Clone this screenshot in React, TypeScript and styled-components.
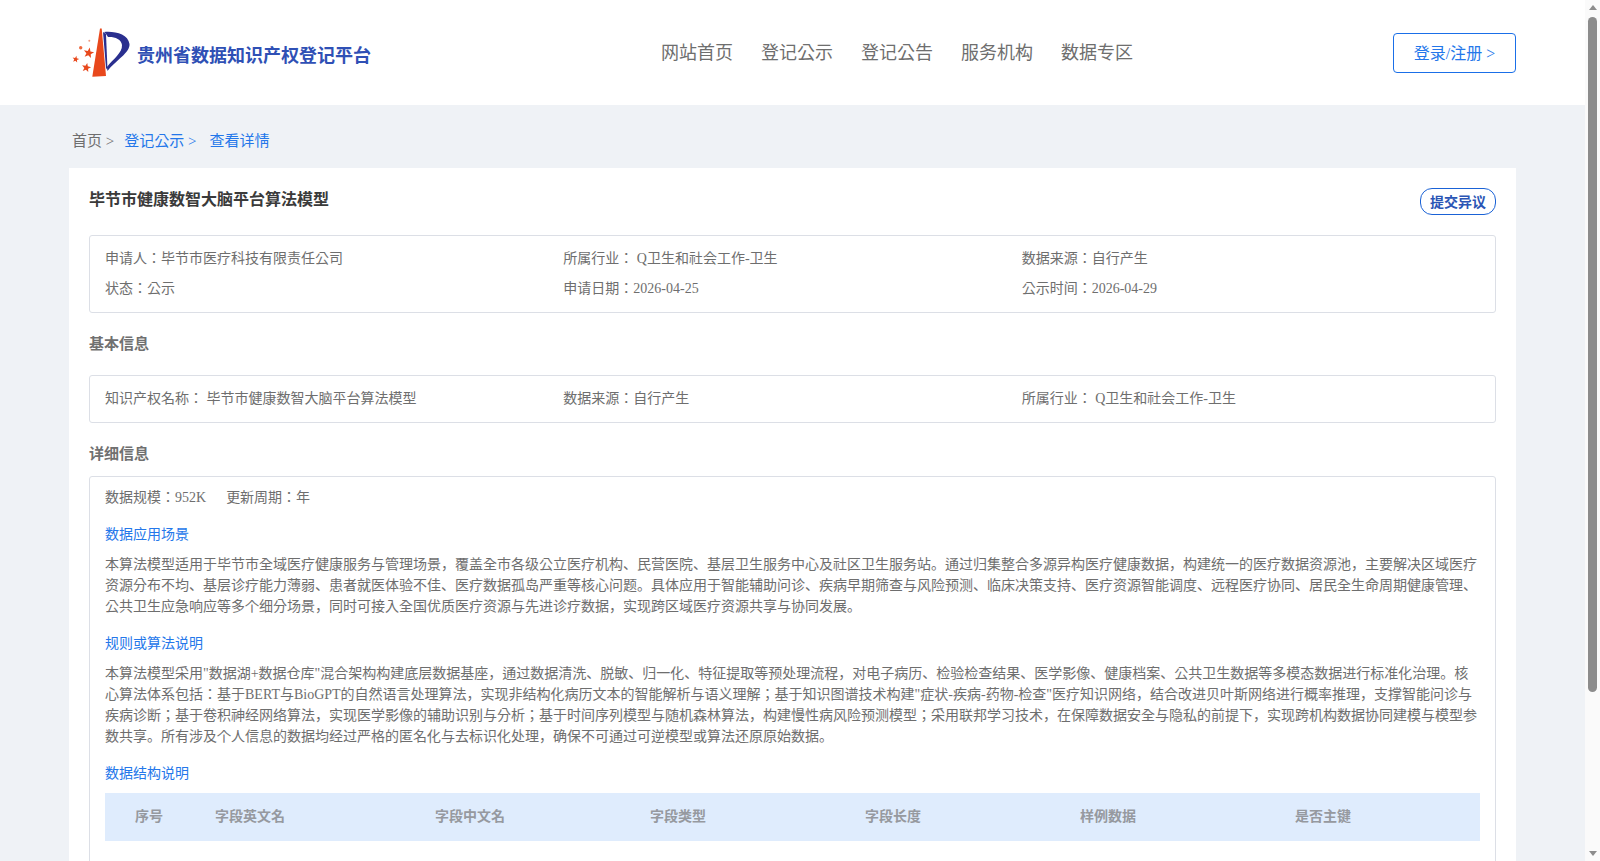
import styled, {createGlobalStyle} from 'styled-components';

const GlobalStyle = createGlobalStyle`
	html, body {
		margin: 0;
		padding: 0;
	}
	body {
		padding-right: 15px;
		background: #eff2f6;
		font-family: 'Liberation Serif', 'Noto Sans CJK KR', serif;
		font-size: 14px;
		line-height: 1.5;
		color: #6e6e6e;
	}
`;

const navItems = ['网站首页', '登记公示', '登记公告', '服务机构', '数据专区'];
const tableColumns = ['序号', '字段英文名', '字段中文名', '字段类型', '字段长度', '样例数据', '是否主键'];

// five pointed star, tilted a little like the one in the logo
function starPoints(cx: number, cy: number, r: number) {
	const points: string[] = [];
	for (let i = 0; i < 10; i++) {
		const radius = i % 2 === 0 ? r : r * 0.42;
		const angle = -Math.PI / 2 + 0.2 + (i * Math.PI) / 5;
		points.push(`${(cx + radius * Math.cos(angle)).toFixed(2)},${(cy + radius * Math.sin(angle)).toFixed(2)}`);
	}
	return points.join(' ');
}

function Logo() {
	return (
		<svg width="69" height="58" viewBox="0 0 69 58">
			<path d="M32 4.5 L33.7 4.5 L38 52 L24.3 52.7 Z" fill="#e8481c" />
			<path d="M36 8 C47 7 60 10 61.5 20 C62 29 48 36 39.5 47 L39 43 C45 35 54.5 29 54 21 C53.5 15 46 12.5 40 13 L38 10 Z" fill="#2a2f8f" />
			<path d="M35 8 L38 10 L39.5 46 L38 44 Z" fill="#2a2f8f" />
			<polygon points={starPoints(20.7, 29, 5.5)} fill="#e8481c" />
			<polygon points={starPoints(18.3, 43.7, 4.8)} fill="#e8481c" />
			<polygon points={starPoints(7.7, 35.3, 3.5)} fill="#e8481c" />
			<circle cx="12.7" cy="23.7" r="1.7" fill="#ee6a40" />
			<circle cx="21.3" cy="16.7" r="1" fill="#f09a80" />
		</svg>
	);
}

function App() {
	return (
		<>
			<GlobalStyle />
			<Header>
				<Brand>
					<Logo />
					<BrandName>贵州省数据知识产权登记平台</BrandName>
				</Brand>
				<Nav>
					{navItems.map((item) => (
						<NavItem key={item}>{item}</NavItem>
					))}
				</Nav>
				<LoginButton>登录/注册 &gt;</LoginButton>
			</Header>
			<Main>
				<Breadcrumb>
					<Crumb>首页 &gt;</Crumb>
					<Crumb $link>登记公示 &gt;</Crumb>
					<Crumb $link>查看详情</Crumb>
				</Breadcrumb>
				<Card>
					<TitleRow>
						<Title>毕节市健康数智大脑平台算法模型</Title>
						<ObjectionButton>提交异议</ObjectionButton>
					</TitleRow>
					<InfoBox>
						<InfoGrid>
							<span>申请人：毕节市医疗科技有限责任公司</span>
							<span>所属行业： Q卫生和社会工作-卫生</span>
							<span>数据来源：自行产生</span>
							<span>状态：公示</span>
							<span>申请日期：2026-04-25</span>
							<span>公示时间：2026-04-29</span>
						</InfoGrid>
					</InfoBox>
					<SectionTitle>基本信息</SectionTitle>
					<InfoBox>
						<InfoGrid>
							<span>知识产权名称： 毕节市健康数智大脑平台算法模型</span>
							<span>数据来源：自行产生</span>
							<span>所属行业： Q卫生和社会工作-卫生</span>
						</InfoGrid>
					</InfoBox>
					<SectionTitle $tight>详细信息</SectionTitle>
					<DetailBox>
						<ScaleRow>
							<span>数据规模：952K</span>
							<span>更新周期：年</span>
						</ScaleRow>
						<BlueHeading>数据应用场景</BlueHeading>
						<Paragraph>
							本算法模型适用于毕节市全域医疗健康服务与管理场景，覆盖全市各级公立医疗机构、民营医院、基层卫生服务中心及社区卫生服务站。通过归集整合多源异构医疗健康数据，构建统一的医疗数据资源池，主要解决区域医疗资源分布不均、基层诊疗能力薄弱、患者就医体验不佳、医疗数据孤岛严重等核心问题。具体应用于智能辅助问诊、疾病早期筛查与风险预测、临床决策支持、医疗资源智能调度、远程医疗协同、居民全生命周期健康管理、公共卫生应急响应等多个细分场景，同时可接入全国优质医疗资源与先进诊疗数据，实现跨区域医疗资源共享与协同发展。
						</Paragraph>
						<BlueHeading>规则或算法说明</BlueHeading>
						<Paragraph>
							本算法模型采用"数据湖+数据仓库"混合架构构建底层数据基座，通过数据清洗、脱敏、归一化、特征提取等预处理流程，对电子病历、检验检查结果、医学影像、健康档案、公共卫生数据等多模态数据进行标准化治理。核心算法体系包括：基于BERT与BioGPT的自然语言处理算法，实现非结构化病历文本的智能解析与语义理解；基于知识图谱技术构建"症状-疾病-药物-检查"医疗知识网络，结合改进贝叶斯网络进行概率推理，支撑智能问诊与疾病诊断；基于卷积神经网络算法，实现医学影像的辅助识别与分析；基于时间序列模型与随机森林算法，构建慢性病风险预测模型；采用联邦学习技术，在保障数据安全与隐私的前提下，实现跨机构数据协同建模与模型参数共享。所有涉及个人信息的数据均经过严格的匿名化与去标识化处理，确保不可通过可逆模型或算法还原原始数据。
						</Paragraph>
						<BlueHeading>数据结构说明</BlueHeading>
						<TableHead>
							{tableColumns.map((column) => (
								<HeadCell key={column}>{column}</HeadCell>
							))}
						</TableHead>
					</DetailBox>
				</Card>
			</Main>
			<ScrollTrack>
				<ArrowUp />
				<ScrollThumb />
				<ArrowDown />
			</ScrollTrack>
		</>
	);
}
export default App;

const Header = styled.header`
	display: flex;
	align-items: center;
	height: 105px;
	padding: 0 69px 0 68px;
	background: #fff;
`;

const Brand = styled.div`
	display: flex;
	align-items: center;
	width: 593px;
`;

const BrandName = styled.span`
	margin-top: 7px;
	font-size: 18px;
	font-weight: 700;
	color: #2f50b5;
`;

const Nav = styled.nav`
	display: flex;
	gap: 28px;
	margin-top: 2px;
`;

const NavItem = styled.a`
	font-size: 18px;
	color: #6e6e6e;
`;

const LoginButton = styled.button`
	width: 123px;
	height: 40px;
	margin-left: auto;
	padding: 0 0 2px;
	border: 1px solid #1a6fe8;
	border-radius: 4px;
	background: #fff;
	font-family: inherit;
	font-size: 16px;
	color: #2477ea;
`;

const Main = styled.main`
	padding: 0 69px;
`;

const Breadcrumb = styled.div`
	display: flex;
	align-items: center;
	gap: 10px;
	height: 63px;
	padding: 9px 3px 0;
	box-sizing: border-box;
`;

const Crumb = styled.span<{$link?: boolean}>`
	font-size: 15px;
	margin-right: ${(p) => (p.$link ? '3px' : '0')};
	color: ${(p) => (p.$link ? '#2477ea' : '#6e6e6e')};
`;

const Card = styled.section`
	padding: 20px 20px 0;
	background: #fff;
`;

const TitleRow = styled.div`
	display: flex;
	align-items: flex-start;
	justify-content: space-between;
	height: 47px;
`;

const Title = styled.h1`
	margin: 0;
	font-size: 16px;
	line-height: 24px;
	font-weight: 700;
	color: #3a3a3a;
`;

const ObjectionButton = styled.button`
	width: 76px;
	height: 27px;
	padding: 0 0 2px;
	border: 1px solid #1a62d6;
	border-radius: 12px;
	background: #fff;
	font-family: inherit;
	font-size: 14px;
	font-weight: 700;
	color: #2a55b5;
`;

const InfoBox = styled.div`
	padding: 7px 15px 9px;
	border: 1px solid #dcdfe6;
	border-radius: 3px;
`;

const InfoGrid = styled.div`
	display: grid;
	grid-template-columns: repeat(3, 1fr);
	grid-auto-rows: 30px;
	align-items: center;
`;

const SectionTitle = styled.h2<{$tight?: boolean}>`
	margin: 0;
	padding: 20px 0 ${(p) => (p.$tight ? '11px' : '20px')};
	font-size: 15px;
	line-height: 22px;
	font-weight: 700;
	color: #707070;
`;

const DetailBox = styled.div`
	padding: 10px 15px 220px;
	border: 1px solid #dcdfe6;
	border-radius: 3px;
`;

const ScaleRow = styled.div`
	display: flex;
	gap: 20px;
	line-height: 21px;
`;

const BlueHeading = styled.div`
	margin: 16px 0 9px;
	line-height: 21px;
	color: #2477ea;
`;

const Paragraph = styled.p`
	margin: 0;
	line-height: 21px;
`;

const TableHead = styled.div`
	display: grid;
	grid-template-columns: 110px 220px 215px 215px 215px 215px 1fr;
	align-items: center;
	height: 48px;
	padding-bottom: 2px;
	box-sizing: border-box;
	background: #dfecfd;
`;

const HeadCell = styled.div`
	font-weight: 700;
	color: #96999f;
	&:first-child {
		padding-left: 30px;
	}
`;

const ScrollTrack = styled.div`
	position: fixed;
	top: 0;
	right: 0;
	bottom: 0;
	display: flex;
	flex-direction: column;
	align-items: center;
	width: 15px;
	background: #fafafa;
`;

const ArrowUp = styled.div`
	width: 0;
	height: 0;
	margin-top: 5px;
	border: 4.5px solid transparent;
	border-top: 0;
	border-bottom: 5px solid #8c8c8c;
`;

const ScrollThumb = styled.div`
	width: 9px;
	height: 675px;
	margin-top: 7px;
	border-radius: 5px;
	background: #8c8c8c;
`;

const ArrowDown = styled.div`
	width: 0;
	height: 0;
	margin-top: auto;
	margin-bottom: 5px;
	border: 4.5px solid transparent;
	border-bottom: 0;
	border-top: 5px solid #8c8c8c;
`;
